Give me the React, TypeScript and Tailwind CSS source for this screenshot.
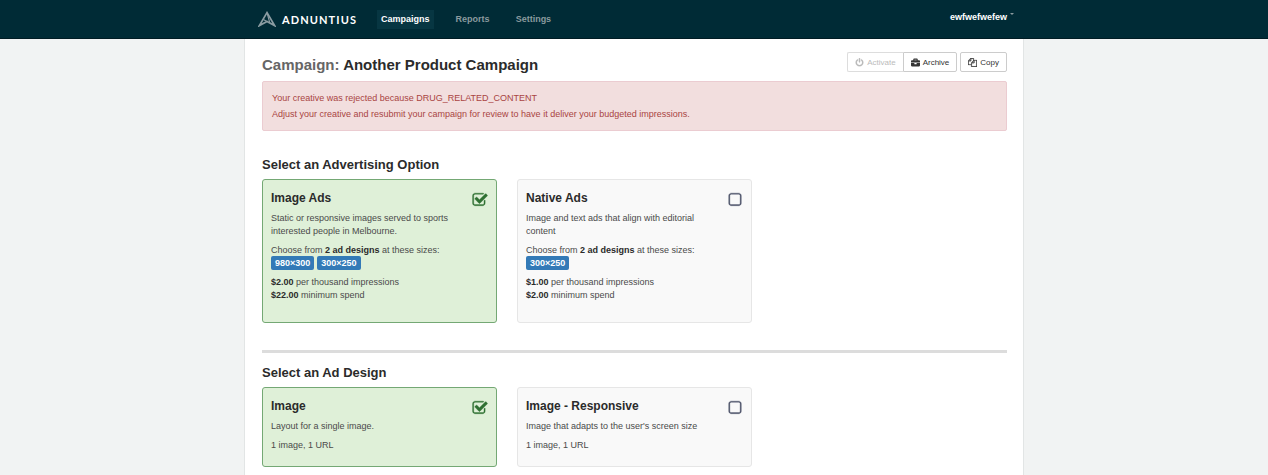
import { useState, type ReactNode } from "react";
import { FaBriefcase } from "react-icons/fa";

const paths = {
  power:
    "M1664 896q0 156-61 298t-164 245-245 164-298 61-298-61-245-164-164-245-61-298q0-182 80.5-343t226.5-270q43-32 95.5-25t83.5 50q32 42 24.5 94.5t-49.5 84.5q-98 74-151.5 181t-53.5 228q0 104 40.5 198.5t109.5 163.5 163.5 109.5 198.5 40.5 198.5-40.5 163.5-109.5 109.5-163.5 40.5-198.5q0-121-53.5-228t-151.5-181q-42-32-49.5-84.5t24.5-94.5q31-43 84-50t95 25q146 109 226.5 270t80.5 343zm-640-768v640q0 52-38 90t-90 38-90-38-38-90v-640q0-52 38-90t90-38 90 38 38 90z",
  files:
    "M1696 384q40 0 68 28t28 68v1216q0 40-28 68t-68 28h-960q-40 0-68-28t-28-68v-288h-544q-40 0-68-28t-28-68v-672q0-40 20-88t48-76l408-408q28-28 76-48t88-20h416q40 0 68 28t28 68v328q68-40 128-40h416zm-544 213l-299 299h299v-299zm-640-384l-299 299h299v-299zm196 647l316-316v-416h-384v416q0 40-28 68t-68 28h-416v640h512v-256q0-40 20-88t48-76zm956 804v-1152h-384v416q0 40-28 68t-68 28h-416v640h896z",
  checked:
    "M1472 930v318q0 119-84.5 203.5t-203.5 84.5h-832q-119 0-203.5-84.5t-84.5-203.5v-832q0-119 84.5-203.5t203.5-84.5h832q63 0 117 25 15 7 18 23 3 17-9 29l-49 49q-10 10-23 10-3 0-9-2-23-6-45-6h-832q-66 0-113 47t-47 113v832q0 66 47 113t113 47h832q66 0 113-47t47-113v-254q0-13 9-22l64-64q10-10 23-10 6 0 12 3 20 8 20 29zm231-489l-814 814q-24 24-57 24t-57-24l-430-430q-24-24-24-57t24-57l110-110q24-24 57-24t57 24l263 263 647-647q24-24 57-24t57 24l110 110q24 24 24 57t-24 57z",
  unchecked:
    "M1312 256h-832q-66 0-113 47t-47 113v832q0 66 47 113t113 47h832q66 0 113-47t47-113v-832q0-66-47-113t-113-47zm288 160v832q0 119-84.5 203.5t-203.5 84.5h-832q-119 0-203.5-84.5t-84.5-203.5v-832q0-119 84.5-203.5t203.5-84.5h832q119 0 203.5 84.5t84.5 203.5z",
};

function Icon({ name, className }: { name: keyof typeof paths; className: string }) {
  return (
    <svg viewBox="0 0 1792 1792" fill="currentColor" stroke="currentColor" strokeWidth="40" className={className} aria-hidden="true">
      <path d={paths[name]} />
    </svg>
  );
}

function Logo() {
  return (
    <a href="#home" className="flex items-center gap-1.5 text-white">
      <svg viewBox="0 0 18 16" className="h-4 w-[18px] text-[#8b9ca2]" fill="none" stroke="currentColor" aria-hidden="true">
        <path d="M9 1.6 1.4 14.6 9 10.4 16.6 14.6Z" strokeWidth="1.7" />
        <path d="M9 1.6 11.8 11.8M5.4 8.4 9 10.4" strokeWidth="1.2" />
      </svg>
      <span className="font-[Lato] text-[11px] font-bold tracking-widest">ADNUNTIUS</span>
    </a>
  );
}

function OptionCard({
  title,
  text,
  initial = false,
  children,
}: {
  title: string;
  text: string;
  initial?: boolean;
  children: ReactNode;
}) {
  const [on, setOn] = useState(initial);
  return (
    <label
      className={
        on
          ? "flex cursor-pointer justify-between rounded-[3px] border border-[#74a874] bg-[#dff0d8] px-2 py-2.5"
          : "flex cursor-pointer justify-between rounded-[3px] border border-[#e6e6e6] bg-[#f9f9f9] px-2 py-2.5"
      }
    >
      <span className="flex flex-1 flex-col gap-1.5">
        <span className="text-[12px] leading-4 font-bold text-[#2b2b2b]">{title}</span>
        <span className="pr-4">{text}</span>
        {children}
      </span>
      <span className="relative mt-0.5 h-4 w-4">
        <input
          type="checkbox"
          aria-label={title}
          checked={on}
          onChange={() => setOn(!on)}
          className="absolute inset-0 cursor-pointer opacity-0"
        />
        <Icon
          name={on ? "checked" : "unchecked"}
          className={on ? "h-4 w-4 text-[#2f7032]" : "h-4 w-4 text-[#4c5268]"}
        />
      </span>
    </label>
  );
}

function Sizes({ sizes }: { sizes: string[] }) {
  return (
    <span className="flex flex-col">
      <span className="leading-3">
        Choose from <b className="text-[#2b2b2b]">2 ad designs</b> at these sizes:
      </span>
      <span className="flex gap-[3px]">
        {sizes.map((s) => (
          <span key={s} className="rounded-[2px] bg-[#337ab7] px-1 leading-[14px] font-bold text-white">
            {s}
          </span>
        ))}
      </span>
    </span>
  );
}

function Price({ rate, min }: { rate: string; min: string }) {
  return (
    <span className="flex flex-col">
      <span>
        <b className="text-[#2b2b2b]">{rate}</b> per thousand impressions
      </span>
      <span>
        <b className="text-[#2b2b2b]">{min}</b> minimum spend
      </span>
    </span>
  );
}

export default function App() {
  return (
    <div className="flex min-h-screen flex-col bg-[#f1f3f3] font-['Liberation_Sans',Arial,sans-serif] text-[9px] leading-[13px] text-[#4a4a4a]">
      <header className="border-b border-[#001c24] bg-[#002b36]">
        <div className="mx-auto flex h-[38px] w-full max-w-[780px] items-center pr-2.5 pl-3.5">
          <Logo />
          <nav className="ml-5 flex flex-1 gap-[18px] font-bold text-[#8a9a9e]">
            <a href="#campaigns" className="bg-[#073642] px-1 py-[3px] text-white">Campaigns</a>
            <a href="#reports" className="px-1 py-[3px]">Reports</a>
            <a href="#settings" className="px-1 py-[3px]">Settings</a>
          </nav>
          <button type="button" className="flex gap-[3px] pb-1 font-bold text-white">
            ewfwefwefew
            <span className="mt-0.5 h-0 w-0 border-x-2 border-t-2 border-x-transparent border-t-[#8a9a9e]" />
          </button>
        </div>
      </header>
      <main className="mx-auto w-full max-w-[780px] flex-1 border-x border-[#e2e5e5] bg-white pt-[13px] pr-4 pl-[17px]">
        <div className="flex items-start justify-between">
          <h1 className="pt-[3px] text-[15px] leading-5 font-bold text-[#2b2b2b]">
            <span className="text-[#666]">Campaign:</span> Another Product Campaign
          </h1>
          <div className="flex text-[8px] text-[#333]">
            <button type="button" disabled className="flex h-5 items-center gap-[3px] rounded-l-[2px] border border-r-0 border-[#ddd] px-[7px] text-[#bbb]">
              <Icon name="power" className="h-[9px] w-[9px]" />
              Activate
            </button>
            <button type="button" className="flex h-5 items-center gap-[3px] rounded-r-[2px] border border-[#ccc] px-[7px]">
              <FaBriefcase className="h-[9px] w-[9px]" />
              Archive
            </button>
            <button type="button" className="ml-[3px] flex h-5 items-center gap-[3px] rounded-[2px] border border-[#ccc] px-[7px]">
              <Icon name="files" className="h-[9px] w-[9px]" />
              Copy
            </button>
          </div>
        </div>
        <div role="alert" className="mt-1.5 rounded-[2px] border border-[#ebccd1] bg-[#f2dede] px-[9px] py-2 leading-4 text-[#a94442]">
          <p>Your creative was rejected because DRUG_RELATED_CONTENT</p>
          <p>Adjust your creative and resubmit your campaign for review to have it deliver your budgeted impressions.</p>
        </div>
        <section className="mt-6">
          <h2 className="text-[13px] leading-5 font-bold text-[#2b2b2b]">Select an Advertising Option</h2>
          <div className="mt-1 grid auto-rows-[minmax(144px,auto)] grid-cols-3 gap-5">
            <OptionCard initial title="Image Ads" text="Static or responsive images served to sports interested people in Melbourne.">
              <Sizes sizes={["980×300", "300×250"]} />
              <Price rate="$2.00" min="$22.00" />
            </OptionCard>
            <OptionCard title="Native Ads" text="Image and text ads that align with editorial content">
              <Sizes sizes={["300×250"]} />
              <Price rate="$1.00" min="$2.00" />
            </OptionCard>
          </div>
        </section>
        <hr className="mt-[27px] border-t-3 border-[#dcdcdc]" />
        <section className="mt-2.5">
          <h2 className="text-[13px] leading-5 font-bold text-[#2b2b2b]">Select an Ad Design</h2>
          <div className="mt-1 grid auto-rows-[minmax(80px,auto)] grid-cols-3 gap-5">
            <OptionCard initial title="Image" text="Layout for a single image.">
              <span>1 image, 1 URL</span>
            </OptionCard>
            <OptionCard title="Image - Responsive" text="Image that adapts to the user's screen size">
              <span>1 image, 1 URL</span>
            </OptionCard>
          </div>
        </section>
      </main>
    </div>
  );
}
